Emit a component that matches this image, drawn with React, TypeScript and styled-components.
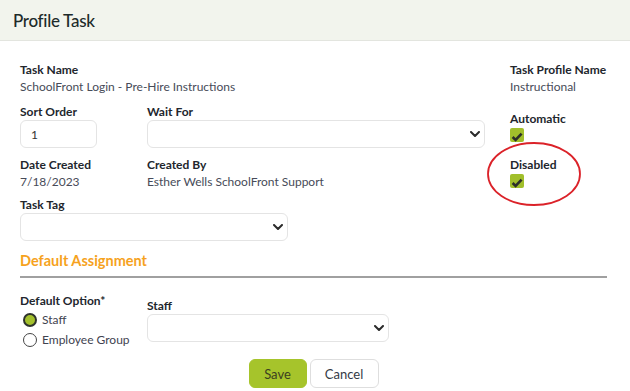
import React from "react";
import styled, { createGlobalStyle } from "styled-components";

const GlobalStyle = createGlobalStyle`
  html, body { margin: 0; padding: 0; background: #ffffff; }
  body { font-family: "Lato", "Noto Sans", sans-serif; color: #222; }
  * { box-sizing: border-box; }
`;

const Page = styled.div`
  width: 630px;
  height: 391px;
  position: relative;
  overflow: hidden;
  background: #fff;
`;

const Header = styled.header`
  height: 41px;
  background: #f2f4ed;
  border-bottom: 1px solid #e3e5df;
  display: flex;
  align-items: center;
  padding-left: 13px;
`;

const Title = styled.h1`
  margin: 0;
  font-size: 17px;
  font-weight: 500;
  color: #1d2a2a;
  letter-spacing: -0.3px;
`;

const Body = styled.div`
  padding: 22px 23px 0 20px;
`;

const TopGrid = styled.div`
  display: grid;
  grid-template-columns: 127px 363px 1fr;
  row-gap: 10px;
`;

const Field = styled.div<{ $span?: number; $offset?: number }>`
  display: flex;
  flex-direction: column;
  ${(p) => (p.$span ? `grid-column: span ${p.$span};` : "")}
  ${(p) => (p.$offset ? `margin-top: ${p.$offset}px;` : "")}
`;

const Label = styled.label`
  font-size: 12px;
  line-height: 14px;
  font-weight: 700;
  color: #22262d;
`;

const Value = styled.div`
  font-size: 12px;
  line-height: 16px;
  color: #474b58;
  margin-top: 2px;
`;

const TextInput = styled.input<{ $w: number }>`
  width: ${(p) => p.$w}px;
  height: 28px;
  margin-top: 1px;
  border: 1px solid #e4e4e4;
  border-radius: 6px;
  padding: 0 10px;
  font-family: inherit;
  font-size: 12px;
  color: #333;
  background: #fff;
  outline: none;
`;

const SelectWrap = styled.div<{ $w: number }>`
  position: relative;
  width: ${(p) => p.$w}px;
  height: 28px;
  margin-top: 1px;
`;

const SelectBox = styled.select`
  appearance: none;
  width: 100%;
  height: 100%;
  border: 1px solid #e4e4e4;
  border-radius: 6px;
  background: #fff;
  font-family: inherit;
  font-size: 12px;
  padding: 0 10px;
  outline: none;
`;

const Chevron = styled.svg`
  position: absolute;
  right: 5px;
  top: 50%;
  width: 10px;
  height: 6px;
  margin-top: -3px;
  pointer-events: none;
`;

const Select = ({ w }: { w: number }) => (
  <SelectWrap $w={w}>
    <SelectBox>
      <option></option>
    </SelectBox>
    <Chevron viewBox="0 0 10 6">
      <path d="M1 1l4 4 4-4" fill="none" stroke="#2b2b2b" strokeWidth="2" strokeLinecap="round" strokeLinejoin="round" />
    </Chevron>
  </SelectWrap>
);

const CheckSquare = styled.span`
  display: block;
  width: 14px;
  height: 14px;
  margin-top: 2px;
  border-radius: 2px;
  background: #a1bf2b;
`;

const Check = () => (
  <CheckSquare>
    <svg width="14" height="14" viewBox="0 0 14 14">
      <path d="M2.6 7l3 3L11.6 3.6" fill="none" stroke="#2c2f2a" strokeWidth="2.6" />
    </svg>
  </CheckSquare>
);

const Annotation = styled.svg`
  position: absolute;
  left: 486px;
  top: 141px;
  width: 96px;
  height: 66px;
  pointer-events: none;
`;

const SectionTitle = styled.h2`
  margin: 11px 0 0;
  font-size: 14.5px;
  line-height: 18px;
  font-weight: 700;
  color: #f6a21d;
`;

const Divider = styled.hr`
  margin: 6px 0 0;
  border: none;
  height: 2px;
  background: #a0a0a0;
`;

const AssignRow = styled.div`
  display: grid;
  grid-template-columns: 127px 1fr;
  margin-top: 16px;
`;

const RadioList = styled.div`
  display: flex;
  flex-direction: column;
  gap: 4px;
  margin-top: 4px;
`;

const RadioItem = styled.label`
  display: flex;
  align-items: center;
  gap: 5px;
  font-size: 12px;
  line-height: 16px;
  color: #3f4350;
  padding-left: 3px;
`;

const RadioDot = styled.span<{ $on?: boolean }>`
  width: 14px;
  height: 14px;
  border-radius: 50%;
  flex: none;
  border: ${(p) => (p.$on ? "2px solid #2e332c" : "1px solid #444")};
  background: ${(p) => (p.$on ? "#a3c02c" : "#fff")};
`;

const Actions = styled.div`
  display: flex;
  justify-content: center;
  gap: 3px;
  margin-top: 11px;
`;

const Button = styled.button<{ $primary?: boolean }>`
  height: 29px;
  padding: 0 14px;
  border-radius: 6px;
  font-family: inherit;
  font-size: 13px;
  cursor: pointer;
  border: 1px solid ${(p) => (p.$primary ? "#a6c42b" : "#dedede")};
  background: ${(p) => (p.$primary ? "#a6c42b" : "#fff")};
  color: ${(p) => (p.$primary ? "#3b4020" : "#333a45")};
  min-width: ${(p) => (p.$primary ? 58 : 69)}px;
`;

export default function App() {
  return (
    <Page>
      <GlobalStyle />
      <Header>
        <Title>Profile Task</Title>
      </Header>
      <Body>
        <TopGrid>
          <Field $span={2}>
            <Label>Task Name</Label>
            <Value>SchoolFront Login - Pre-Hire Instructions</Value>
          </Field>
          <Field>
            <Label>Task Profile Name</Label>
            <Value>Instructional</Value>
          </Field>

          <Field>
            <Label>Sort Order</Label>
            <TextInput $w={77} defaultValue="1" />
          </Field>
          <Field>
            <Label>Wait For</Label>
            <Select w={338} />
          </Field>
          <Field $offset={7}>
            <Label>Automatic</Label>
            <Check />
          </Field>

          <Field>
            <Label>Date Created</Label>
            <Value>7/18/2023</Value>
          </Field>
          <Field>
            <Label>Created By</Label>
            <Value>Esther Wells SchoolFront Support</Value>
          </Field>
          <Field>
            <Label>Disabled</Label>
            <Check />
          </Field>

          <Field $span={3} $offset={-2}>
            <Label>Task Tag</Label>
            <Select w={268} />
          </Field>
        </TopGrid>

        <SectionTitle>Default Assignment</SectionTitle>
        <Divider />

        <AssignRow>
          <Field>
            <Label>Default Option*</Label>
            <RadioList>
              <RadioItem>
                <RadioDot $on />
                Staff
              </RadioItem>
              <RadioItem>
                <RadioDot />
                Employee Group
              </RadioItem>
            </RadioList>
          </Field>
          <Field $offset={5}>
            <Label>Staff</Label>
            <Select w={242} />
          </Field>
        </AssignRow>

        <Actions>
          <Button $primary>Save</Button>
          <Button>Cancel</Button>
        </Actions>
      </Body>
      <Annotation viewBox="0 0 96 66">
        <ellipse cx="48" cy="33" rx="46" ry="31" fill="none" stroke="#db2229" strokeWidth="1.8" />
      </Annotation>
    </Page>
  );
}
